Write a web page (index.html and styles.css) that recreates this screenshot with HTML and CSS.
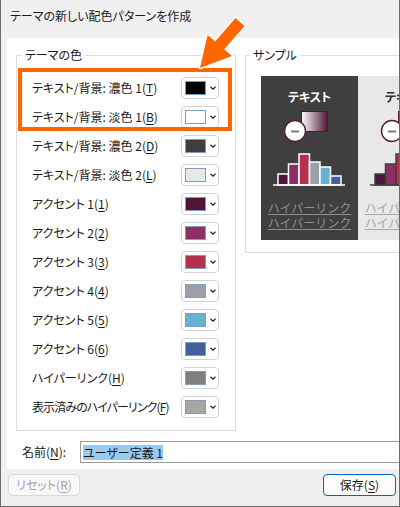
FILE: index.html
```html
<!DOCTYPE html>
<html lang="ja">
<head>
<meta charset="utf-8">
<title>テーマの新しい配色パターンを作成</title>
<link rel="stylesheet" href="styles.css">
</head>
<body>
<div class="window">
  <div class="titlebar">テーマの新しい配色パターンを作成</div>
  <div class="panel">
    <div class="groups">
      <fieldset class="group colors">
        <legend>テーマの色</legend>
        <div class="row"><span class="label">テキスト/背景: 濃色 1(<u>T</u>)</span><span class="picker"><span class="swatch" style="--c:#000000"></span><svg class="chev" viewBox="0 0 6 4"><polyline points="0.5,0.8 3,3.2 5.5,0.8"/></svg></span></div>
        <div class="row"><span class="label">テキスト/背景: 淡色 1(<u>B</u>)</span><span class="picker"><span class="swatch" style="--c:#ffffff"></span><svg class="chev" viewBox="0 0 6 4"><polyline points="0.5,0.8 3,3.2 5.5,0.8"/></svg></span></div>
        <div class="row"><span class="label">テキスト/背景: 濃色 2(<u>D</u>)</span><span class="picker"><span class="swatch" style="--c:#3f3f3f"></span><svg class="chev" viewBox="0 0 6 4"><polyline points="0.5,0.8 3,3.2 5.5,0.8"/></svg></span></div>
        <div class="row"><span class="label">テキスト/背景: 淡色 2(<u>L</u>)</span><span class="picker"><span class="swatch" style="--c:#e8e8e8"></span><svg class="chev" viewBox="0 0 6 4"><polyline points="0.5,0.8 3,3.2 5.5,0.8"/></svg></span></div>
        <div class="row"><span class="label">アクセント 1(<u>1</u>)</span><span class="picker"><span class="swatch" style="--c:#4f1538"></span><svg class="chev" viewBox="0 0 6 4"><polyline points="0.5,0.8 3,3.2 5.5,0.8"/></svg></span></div>
        <div class="row"><span class="label">アクセント 2(<u>2</u>)</span><span class="picker"><span class="swatch" style="--c:#8e2e62"></span><svg class="chev" viewBox="0 0 6 4"><polyline points="0.5,0.8 3,3.2 5.5,0.8"/></svg></span></div>
        <div class="row"><span class="label">アクセント 3(<u>3</u>)</span><span class="picker"><span class="swatch" style="--c:#b5304b"></span><svg class="chev" viewBox="0 0 6 4"><polyline points="0.5,0.8 3,3.2 5.5,0.8"/></svg></span></div>
        <div class="row"><span class="label">アクセント 4(<u>4</u>)</span><span class="picker"><span class="swatch" style="--c:#9aa0aa"></span><svg class="chev" viewBox="0 0 6 4"><polyline points="0.5,0.8 3,3.2 5.5,0.8"/></svg></span></div>
        <div class="row"><span class="label">アクセント 5(<u>5</u>)</span><span class="picker"><span class="swatch" style="--c:#66b2d0"></span><svg class="chev" viewBox="0 0 6 4"><polyline points="0.5,0.8 3,3.2 5.5,0.8"/></svg></span></div>
        <div class="row"><span class="label">アクセント 6(<u>6</u>)</span><span class="picker"><span class="swatch" style="--c:#445fa0"></span><svg class="chev" viewBox="0 0 6 4"><polyline points="0.5,0.8 3,3.2 5.5,0.8"/></svg></span></div>
        <div class="row"><span class="label">ハイパーリンク(<u>H</u>)</span><span class="picker"><span class="swatch" style="--c:#7f7f7f"></span><svg class="chev" viewBox="0 0 6 4"><polyline points="0.5,0.8 3,3.2 5.5,0.8"/></svg></span></div>
        <div class="row"><span class="label tight">表示済みのハイパーリンク(<u>F</u>)</span><span class="picker"><span class="swatch" style="--c:#a6a6a6"></span><svg class="chev" viewBox="0 0 6 4"><polyline points="0.5,0.8 3,3.2 5.5,0.8"/></svg></span></div>
      </fieldset>
      <fieldset class="group sample">
        <legend>サンプル</legend>
        <div class="previews">
          <div class="preview dark">
            <div class="ptitle">テキスト</div>
            <svg class="chart" viewBox="0 0 97 80" width="97" height="80">
              <defs>
                <linearGradient id="g1" x1="0" x2="1" y1="0" y2="0">
                  <stop offset="0" stop-color="#ffffff"/>
                  <stop offset="1" stop-color="#4f1538"/>
                </linearGradient>
              </defs>
              <rect x="40.5" y="2.5" width="26" height="20" fill="url(#g1)" stroke="#4f1538" stroke-width="1"/>
              <circle cx="34" cy="22" r="10.5" fill="#ffffff" stroke="#5a1a3e" stroke-width="1.4"/>
              <polyline class="wave" points="30,23.5 31,21.5 32,23.5 33,21.5 34,23.5 35,21.5 36,23.5 37,21.5 38,23.5"/>
              <g class="bars">
                <rect x="17" y="65" width="10.5" height="11" fill="#4f1538"/>
                <rect x="27.5" y="55" width="10.5" height="21" fill="#8e2e62"/>
                <rect x="38" y="45" width="10.5" height="31" fill="#b5304b"/>
                <rect x="48.5" y="53" width="10.5" height="23" fill="#9aa0aa"/>
                <rect x="59" y="58" width="10.5" height="18" fill="#66b2d0"/>
                <rect x="69.5" y="67" width="10.5" height="9" fill="#445fa0"/>
              </g>
              <line class="base" x1="12" y1="76" x2="84" y2="76"/>
            </svg>
            <div class="links"><span>ハイパーリンク</span><span>ハイパーリンク</span></div>
          </div>
          <div class="preview light">
            <div class="ptitle">テキスト</div>
            <svg class="chart" viewBox="0 0 97 80" width="97" height="80">
              <defs>
                <linearGradient id="g2" x1="0" x2="1" y1="0" y2="0">
                  <stop offset="0" stop-color="#ffffff"/>
                  <stop offset="1" stop-color="#4f1538"/>
                </linearGradient>
              </defs>
              <rect x="40.5" y="2.5" width="26" height="20" fill="url(#g2)" stroke="#4f1538" stroke-width="1"/>
              <circle cx="34" cy="22" r="10.5" fill="#ffffff" stroke="#5a1a3e" stroke-width="1.4"/>
              <polyline class="wave" points="30,23.5 31,21.5 32,23.5 33,21.5 34,23.5 35,21.5 36,23.5 37,21.5 38,23.5"/>
              <g class="bars">
                <rect x="17" y="65" width="10.5" height="11" fill="#4f1538"/>
                <rect x="27.5" y="55" width="10.5" height="21" fill="#8e2e62"/>
                <rect x="38" y="45" width="10.5" height="31" fill="#b5304b"/>
                <rect x="48.5" y="53" width="10.5" height="23" fill="#9aa0aa"/>
                <rect x="59" y="58" width="10.5" height="18" fill="#66b2d0"/>
                <rect x="69.5" y="67" width="10.5" height="9" fill="#445fa0"/>
              </g>
              <line class="base" x1="12" y1="76" x2="84" y2="76"/>
            </svg>
            <div class="links"><span>ハイパーリンク</span><span>ハイパーリンク</span></div>
          </div>
        </div>
      </fieldset>
    </div>
    <div class="name-row">
      <label class="name-label">名前(<u>N</u>):</label>
      <div class="input"><span class="sel">ユーザー定義 1</span></div>
    </div>
  </div>
  <div class="footer">
    <span class="btn disabled">リセット(<u>R</u>)</span>
    <span class="btn primary">保存(<u>S</u>)</span>
  </div>
</div>
<div class="annot-box"></div>
<svg class="annot-arrow" viewBox="0 0 60 70" width="60" height="70">
  <polygon points="10,63 41.8,50.9 34.2,44.3 54.5,20.9 45.5,13.1 25.2,36.5 17.6,29.9" fill="#ff6600" stroke="#ffffff" stroke-width="2.5" stroke-linejoin="round" paint-order="stroke"/>
</svg>
</body>
</html>
```
FILE: styles.css
```css
* { box-sizing: border-box; }
html, body { margin: 0; padding: 0; }
body {
  width: 400px;
  height: 507px;
  overflow: hidden;
  position: relative;
  background: #f0f0f0;
  font-family: "Noto Sans CJK JP", "Noto Sans", sans-serif;
  font-size: 12px;
  color: #1a1a1a;
  font-feature-settings: "palt";
}
u { text-decoration-thickness: 1px; text-underline-offset: 2px; }

.window {
  width: 400px;
  height: 507px;
  border-left: 1px solid #6b6b6b;
  border-right: 1px solid #6b6b6b;
  border-bottom: 1px solid #6b6b6b;
  display: flex;
  flex-direction: column;
}
.titlebar {
  flex: none;
  height: 38px;
  padding: 7px 0 0 9px;
  line-height: 18px;
  color: #1a1a1a;
}
.panel {
  flex: none;
  height: 431px;
  margin-left: 6px;
  background: #ffffff;
  overflow: hidden;
  padding: 0 0 0 9px;
}
.groups {
  display: flex;
  align-items: flex-start;
  gap: 9px;
  padding-top: 9px;
}
.group {
  margin: 0;
  padding: 0;
  border: 1px solid #dcdcdc;
  min-width: 0;
  flex: none;
}
.group legend {
  padding: 0 3px;
  line-height: 16px;
  color: #1a1a1a;
}
.colors {
  width: 220px;
  height: 384px;
  padding: 10px 16px 0 15px;
}
.colors legend { margin-left: -10px; }
.row {
  height: 29px;
  display: flex;
  align-items: center;
  justify-content: space-between;
}
.label { line-height: 16px; white-space: nowrap; }
.label.tight { letter-spacing: -0.9px; }
.picker {
  flex: none;
  width: 38px;
  height: 22px;
  border: 1px solid #d3d3d3;
  border-radius: 4px;
  background: #ffffff;
  display: flex;
  align-items: center;
  padding-left: 3px;
}
.swatch {
  width: 21px;
  height: 14px;
  border: 1px solid #7f9dc0;
  background: var(--c);
}
.chev {
  width: 6px;
  height: 4px;
  margin-left: 4px;
}
.chev polyline {
  fill: none;
  stroke: #222;
  stroke-width: 1.2;
}

.sample {
  width: 220px;
  height: 206px;
  padding: 13px 0 0 15px;
}
.sample legend { margin-left: -11px; }
.previews { display: flex; }
.preview {
  flex: none;
  width: 97px;
  height: 164px;
  display: flex;
  flex-direction: column;
  align-items: center;
  padding-top: 13px;
}
.preview.dark { background: #3f3f3f; }
.preview.light { background: #e8e8e8; }
.ptitle {
  line-height: 16px;
  font-weight: bold;
  white-space: nowrap;
}
.dark .ptitle { color: #ffffff; }
.light .ptitle { color: #2e2e2e; }
.chart { display: block; margin-top: 4px; flex: none; }
.wave { fill: none; stroke: #3a3a3a; stroke-width: 0.7; }
.dark .bars rect { stroke: #ffffff; stroke-width: 1.5; }
.light .bars rect { stroke: #3f3f3f; stroke-width: 1.5; }
.dark .base { stroke: #ffffff; stroke-width: 1.5; }
.light .base { stroke: #3f3f3f; stroke-width: 1.5; }
.links {
  margin-top: 11px;
  display: flex;
  flex-direction: column;
  align-items: center;
  font-feature-settings: normal;
  line-height: 15px;
  white-space: nowrap;
}
.links span {
  text-decoration: underline;
  text-decoration-thickness: 1px;
  text-underline-offset: 1px;
}
.dark .links { color: #8f8f8f; }
.light .links { color: #a6a6a6; }

.name-row {
  display: flex;
  align-items: center;
  margin-top: 10px;
}
.name-label {
  flex: none;
  width: 64px;
  padding-left: 6px;
  line-height: 16px;
}
.input {
  flex: none;
  width: 330px;
  height: 22px;
  border: 1px solid #9a9a9a;
  display: flex;
  align-items: center;
  padding-left: 2px;
}
.sel {
  background: #99c9ef;
  line-height: 15px;
  color: #1a1a1a;
  white-space: nowrap;
}

.footer {
  flex: 1;
  display: flex;
  justify-content: space-between;
  align-items: flex-start;
  padding: 5px 3px 0 7px;
}
.btn {
  height: 22px;
  border-radius: 4px;
  display: flex;
  align-items: center;
  justify-content: center;
  line-height: 16px;
  white-space: nowrap;
}
.btn.disabled {
  width: 72px;
  background: #f8f8f8;
  border: 1px solid #d8d8d8;
  color: #a3a3a3;
}
.btn.primary {
  width: 73px;
  background: #fdfdfd;
  border: 1px solid #0067c0;
  color: #1a1a1a;
}

.annot-box {
  position: absolute;
  left: 18px;
  top: 68px;
  width: 214px;
  height: 63px;
  border: 4px solid #ff6600;
}
.annot-arrow {
  position: absolute;
  left: 190px;
  top: 5px;
}
```
